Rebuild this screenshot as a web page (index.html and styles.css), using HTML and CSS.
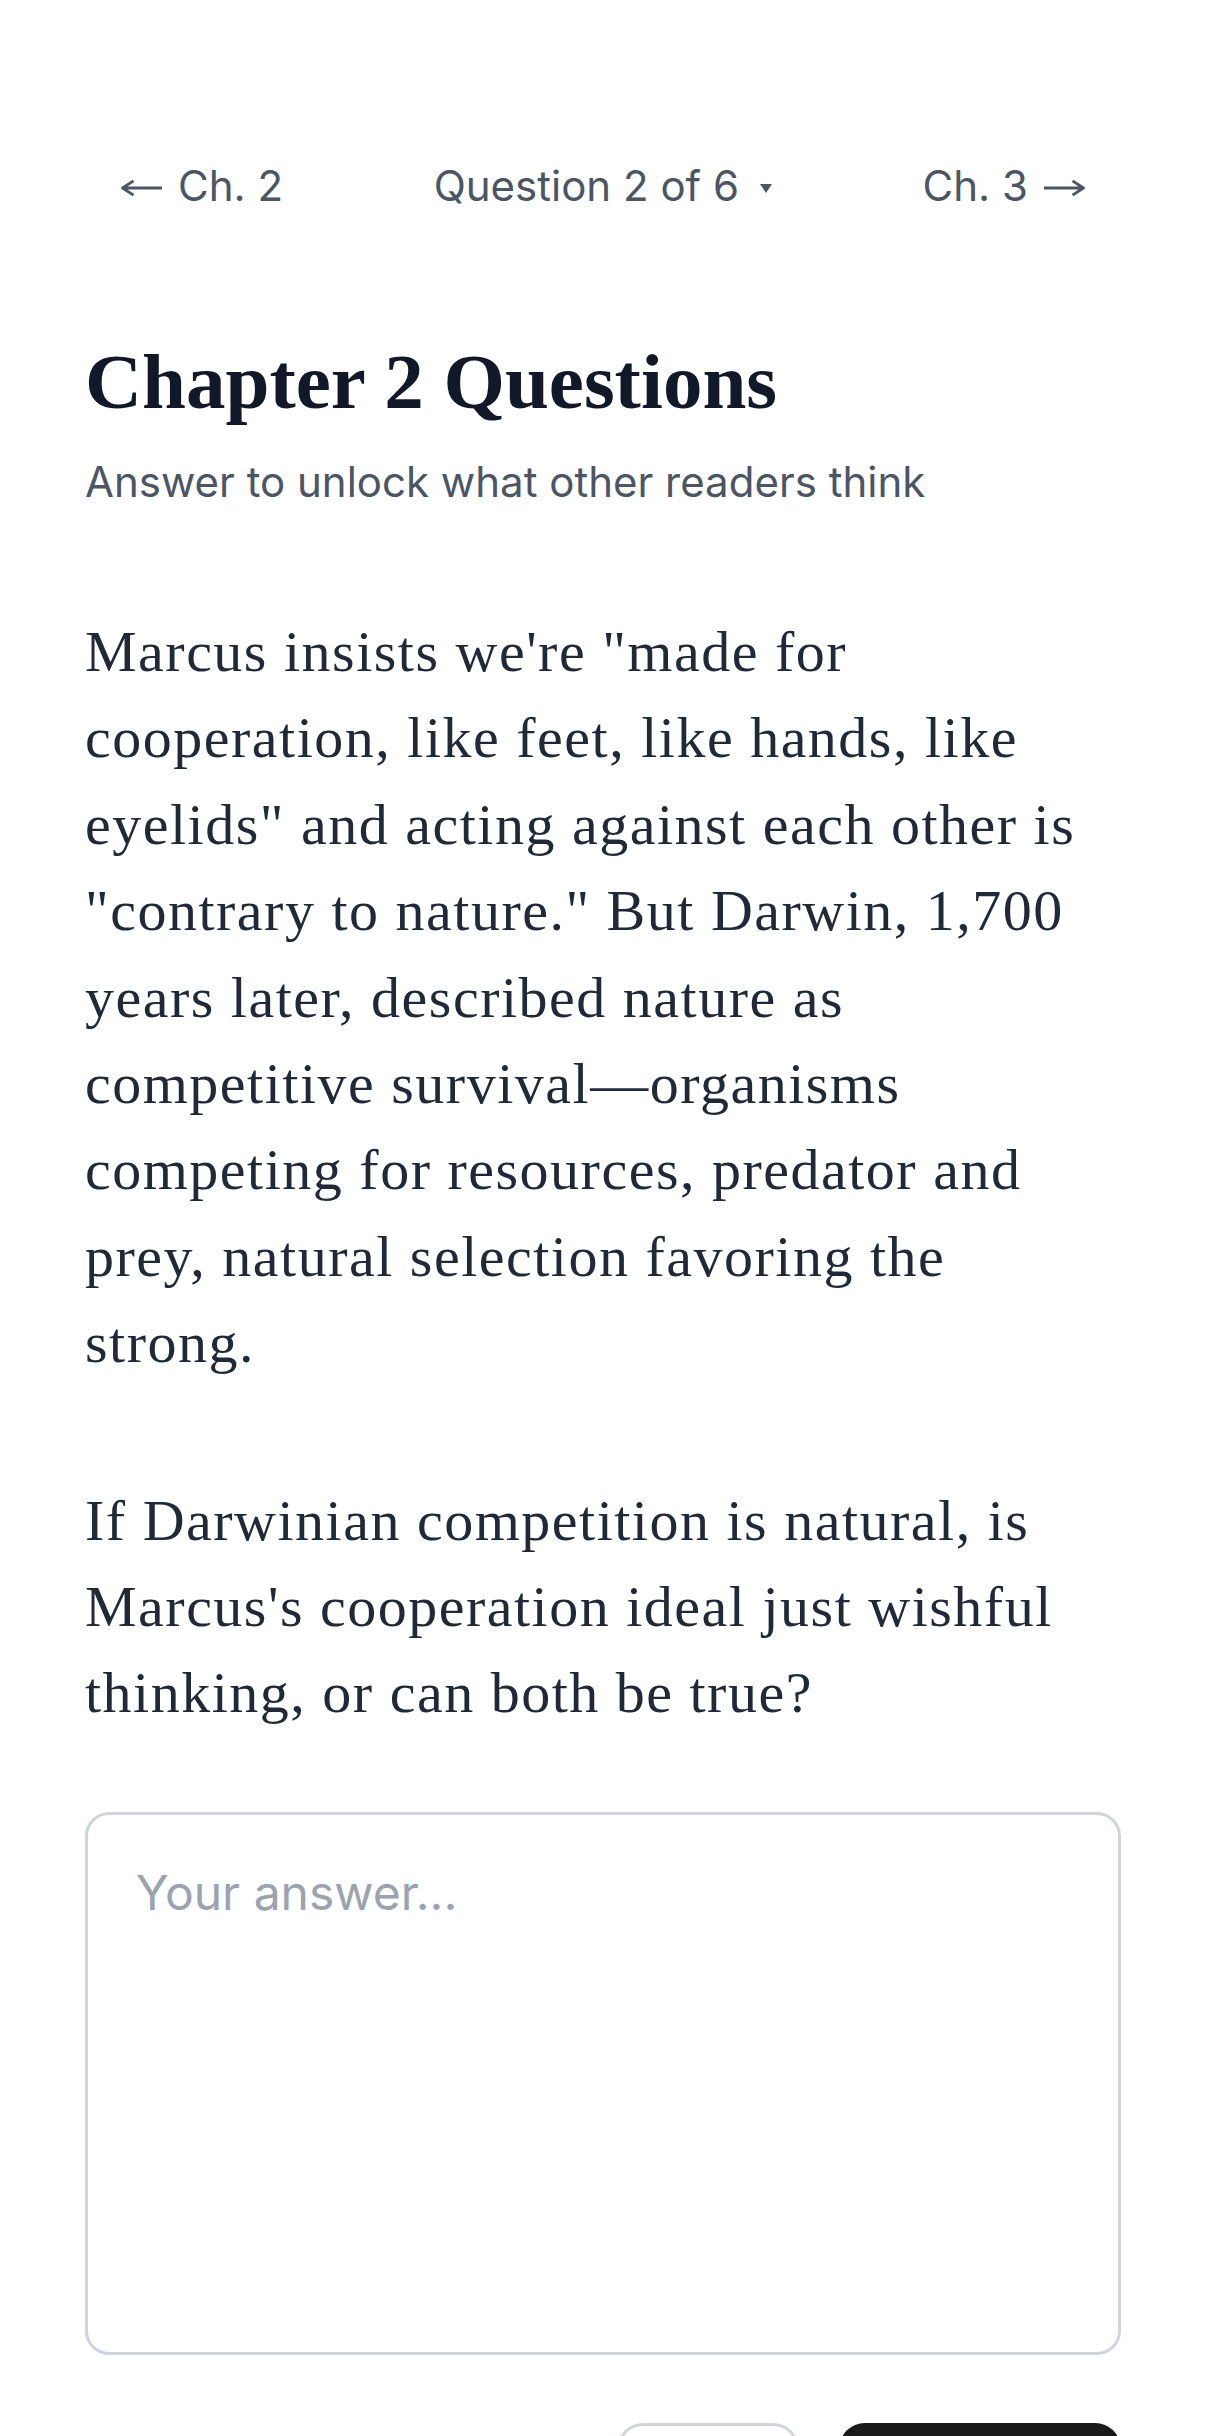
FILE: index.html
```html
<!DOCTYPE html>
<html lang="en">
<head>
<meta charset="utf-8">
<title>Chapter 2 Questions</title>
<link rel="stylesheet" href="styles.css">
</head>
<body>
<main class="page">
  <nav class="nav">
    <a class="nav-item" href="#"><svg class="arrow" width="42" height="18" viewBox="0 0 42 18" aria-hidden="true"><path d="M1.5 9H41 M12.5 1.8L1.5 9L12.5 16.2" fill="none" stroke="#4b5563" stroke-width="2.8" stroke-linejoin="round"/></svg><span>Ch. 2</span></a>
    <button class="nav-item nav-center" type="button"><span>Question 2 of 6</span><svg class="caret" width="12" height="9" viewBox="0 0 12 9" aria-hidden="true"><path d="M0 0H12L6 9Z" fill="#4b5563"/></svg></button>
    <a class="nav-item" href="#"><span>Ch. 3</span><svg class="arrow" width="42" height="18" viewBox="0 0 42 18" aria-hidden="true"><path d="M1 9H40.5 M29.5 1.8L40.5 9L29.5 16.2" fill="none" stroke="#4b5563" stroke-width="2.8" stroke-linejoin="round"/></svg></a>
  </nav>

  <header class="intro">
    <h1 class="title">Chapter 2 Questions</h1>
    <p class="subtitle">Answer to unlock what other readers think</p>
  </header>

  <section class="question">
    <p class="question-text">Marcus insists we're "made for cooperation, like feet, like hands, like eyelids" and acting against each other is "contrary to nature." But Darwin, 1,700 years later, described nature as competitive survival—organisms competing for resources, predator and prey, natural selection favoring the strong.</p>
    <p class="question-text">If Darwinian competition is natural, is Marcus's cooperation ideal just wishful thinking, or can both be true?</p>
  </section>

  <form class="answer">
    <textarea class="answer-box" placeholder="Your answer..."></textarea>
    <div class="actions">
      <button class="btn btn-outline" type="button">Skip</button>
      <button class="btn btn-solid" type="submit">Submit</button>
    </div>
  </form>
</main>
</body>
</html>
```

FILE: styles.css
```css
html, body {
  margin: 0;
  padding: 0;
  background: #ffffff;
}

.page {
  padding: 130px 85px 120px;
}

.nav {
  display: flex;
  justify-content: space-between;
  align-items: center;
}

.nav-item {
  display: flex;
  align-items: center;
  gap: 15px;
  padding: 24px 36px;
  font-family: Inter, "Liberation Sans", sans-serif;
  font-size: 42px;
  line-height: 63px;
  color: #4b5563;
  text-decoration: none;
  background: none;
  border: 0;
  margin: 0;
}

.arrow {
  display: block;
  margin-top: 5px;
}

.caret {
  display: block;
  margin-top: 6px;
  margin-left: 6px;
}

.intro {
  margin-top: 93px;
}

.title {
  margin: 0;
  font-family: "Liberation Serif", "Times New Roman", serif;
  font-weight: 700;
  font-size: 79px;
  line-height: 95px;
  color: #111827;
}

.subtitle {
  margin: 21px 0 0;
  font-family: Inter, "Liberation Sans", sans-serif;
  font-size: 42px;
  line-height: 63px;
  color: #4b5563;
}

.question {
  margin-top: 96px;
  display: flex;
  flex-direction: column;
  gap: 91px;
}

.question-text {
  margin: 0;
  font-family: "Liberation Serif", "Times New Roman", serif;
  font-size: 58px;
  line-height: 86.4px;
  letter-spacing: 1.5px;
  color: #1f2937;
}

.answer {
  margin-top: 75px;
}

.answer-box {
  display: block;
  width: 100%;
  height: 543px;
  box-sizing: border-box;
  padding: 42px 48px;
  border: 3px solid #d1d5db;
  border-radius: 24px;
  font-family: Inter, "Liberation Sans", sans-serif;
  font-size: 48px;
  line-height: 72px;
  color: #1f2937;
  resize: none;
  outline: none;
  background: #ffffff;
}

.answer-box::placeholder {
  color: #9ca3af;
}

.actions {
  margin-top: 68px;
  display: flex;
  justify-content: flex-end;
  gap: 40px;
}

.btn {
  height: 132px;
  box-sizing: border-box;
  border-radius: 26px;
  font-family: Inter, "Liberation Sans", sans-serif;
  font-size: 42px;
  font-weight: 500;
}

.btn-outline {
  width: 182px;
  background: #ffffff;
  border: 3px solid #d1d5db;
  color: #374151;
}

.btn-solid {
  width: 282px;
  background: #1a1a1a;
  border: 0;
  color: #ffffff;
}
```
